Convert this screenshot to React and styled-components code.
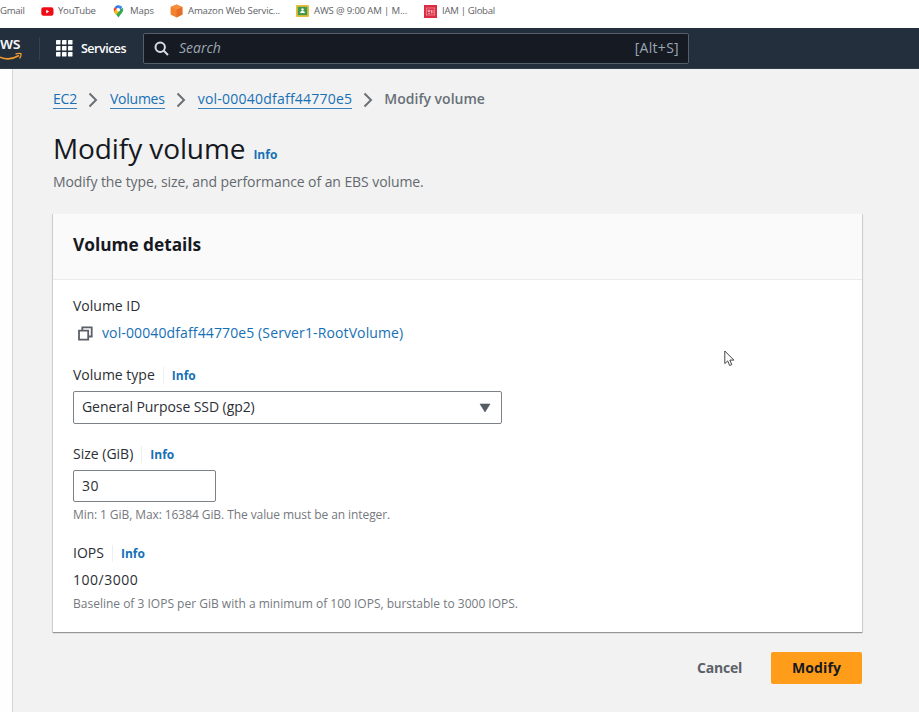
import React from "react";
import styled, { createGlobalStyle } from "styled-components";

const GlobalStyle = createGlobalStyle`
  * { box-sizing: border-box; }
  html, body { margin: 0; overflow: hidden; }
  body {
    font-family: "Open Sans", "Noto Sans", sans-serif;
    font-size: 14px;
    line-height: 20px;
    color: #2b2f35;
    background: #f2f2f2;
  }
`;

const Page = styled.div`
  display: flex;
  flex-direction: column;
  width: 919px;
  height: 712px;
  overflow: hidden;
  position: relative;
`;

const BookmarksBar = styled.div`
  display: flex;
  align-items: center;
  flex: none;
  height: 28px;
  padding-bottom: 6px;
  background: #fff;
`;

const Bookmark = styled.div`
  display: flex;
  align-items: center;
  flex: none;
  gap: ${(p) => p.$gap ?? 5}px;
  width: ${(p) => p.$width}px;
  font-size: 9.6px;
  line-height: 14px;
  letter-spacing: ${(p) => p.$tracking ?? -0.2}px;
  color: #606266;
  white-space: nowrap;
  svg { flex: none; display: block; }
`;

const NavBar = styled.header`
  display: flex;
  align-items: center;
  flex: none;
  height: 41px;
  background: #232f3d;
  color: #fff;
  border-bottom: 1px solid #343b48;
`;

const AwsLogo = styled.div`
  width: 23px;
  height: 30px;
  flex: none;
`;

const LogoText = styled.div`
  font-size: 16px;
  font-weight: 600;
  line-height: 18px;
  height: 18px;
  margin-top: 1px;
  letter-spacing: -0.4px;
  color: #f4f5f6;
`;

const LogoSmile = styled.svg`
  display: block;
`;

const NavDivider = styled.span`
  width: 1px;
  height: 23px;
  margin-left: 16px;
  background: #35414f;
`;

const ServicesButton = styled.div`
  display: flex;
  align-items: center;
  gap: 8px;
  width: 87px;
  padding-top: 1px;
  margin-left: 16px;
  font-size: 12.5px;
  font-weight: 600;
  letter-spacing: -0.5px;
`;

const SearchBox = styled.div`
  display: flex;
  align-items: center;
  width: 546px;
  height: 31px;
  padding: 0 9px 0 10px;
  background: #161a22;
  border: 1px solid #53606c;
  border-radius: 2px;
  color: #9ba7b3;
  svg { flex: none; }
`;

const SearchHint = styled.span`
  flex: 1;
  margin-left: 10px;
  font-style: italic;
`;

const Shortcut = styled.span`
  letter-spacing: 0.3px;
`;

const Body = styled.div`
  display: flex;
  flex: 1;
`;

const SideRail = styled.aside`
  width: 13px;
  flex: none;
  background: #fdfefd;
  border-right: 1px solid #d3d5d6;
`;

const Main = styled.main`
  width: 849px;
  padding: 20px 0 0 40px;
`;

const Breadcrumbs = styled.nav`
  display: flex;
  align-items: center;
  height: 20px;
  svg { flex: none; margin: 1px 12px 0 11px; }
`;

const Crumb = styled.a`
  height: 19px;
  line-height: 18px;
  border-bottom: 1px solid #3a80b9;
  color: #1670b6;
  letter-spacing: ${(p) => p.$tracking}px;
`;

const CurrentCrumb = styled.span`
  font-weight: 600;
  color: #687078;
  margin-left: -1px;
  letter-spacing: 0;
`;

const TitleRow = styled.div`
  display: flex;
  align-items: baseline;
  height: 36px;
  margin-top: 21px;
`;

const Title = styled.h1`
  margin: 0;
  font-size: 28px;
  line-height: 36px;
  font-weight: 400;
  letter-spacing: -0.1px;
  color: #16191f;
`;

const InfoLink = styled.a`
  font-size: 12px;
  line-height: 20px;
  font-weight: ${(p) => p.$weight ?? 700};
  color: #1670b6;
  margin-left: 8px;
`;

const Subtitle = styled.p`
  margin: 6px 0 0;
  height: 20px;
  letter-spacing: -0.08px;
  color: #64696f;
`;

const Card = styled.section`
  height: 418px;
  margin-top: 22px;
  background: #fff;
  box-shadow: 0 1px 1px 0 rgba(0, 10, 20, 0.32), 0 0 1px 1px rgba(0, 10, 20, 0.1);
  clip-path: inset(0 -3px -3px -3px);
`;

const CardHeader = styled.div`
  height: 66px;
  padding: 19px 20px 0;
  background: #fafafa;
  border-bottom: 1px solid #ebebeb;
`;

const CardTitle = styled.h2`
  margin: 0;
  font-size: 17.3px;
  line-height: 24px;
  font-weight: 700;
  letter-spacing: -0.02px;
  color: #16191f;
`;

const CardBody = styled.div`
  padding: 16px 20px 0;
`;

const Field = styled.div`
  margin-bottom: ${(p) => p.$gap}px;
`;

const LabelRow = styled.div`
  display: flex;
  align-items: center;
  height: 20px;
  ${InfoLink} { padding-top: 2px; }
`;

const LabelDivider = styled.span`
  width: 1px;
  height: 17px;
  margin-left: 8px;
  background: #edeff0;
`;

const ResourceLink = styled.a`
  display: flex;
  align-items: center;
  height: 20px;
  margin-top: 7px;
  padding-left: 5px;
  gap: 9px;
  letter-spacing: 0.12px;
  color: #1670b6;
`;

const Control = styled.div`
  display: flex;
  align-items: center;
  justify-content: space-between;
  width: ${(p) => p.$width}px;
  height: ${(p) => p.$height}px;
  margin-top: 6px;
  padding: 0 10px ${(p) => p.$lift ?? 0}px 8px;
  border: 1px solid #7c8288;
  border-radius: 2px;
  background: #fff;
  letter-spacing: ${(p) => p.$tracking}px;
  svg { position: relative; top: 1px; }
`;

const Value = styled.div`
  height: 20px;
  margin-top: 7px;
  letter-spacing: 0.5px;
`;

const Hint = styled.div`
  height: 16px;
  margin-top: ${(p) => p.$top}px;
  font-size: 12px;
  line-height: 16px;
  letter-spacing: ${(p) => p.$tracking ?? 0}px;
  color: #75797e;
`;

const Actions = styled.div`
  display: flex;
  justify-content: flex-end;
  margin-top: 20px;
`;

const Button = styled.button`
  height: 32px;
  width: ${(p) => (p.$primary ? 91 : 85)}px;
  margin-left: ${(p) => (p.$primary ? 9 : 0)}px;
  padding: 0 0 1px;
  border: 0;
  border-radius: 2px;
  font: 700 14px/20px "Open Sans", "Noto Sans", sans-serif;
  letter-spacing: ${(p) => (p.$primary ? 0.1 : -0.2)}px;
  color: ${(p) => (p.$primary ? "#16191f" : "#5b6169")};
  background: ${(p) => (p.$primary ? "#ff9c1a" : "transparent")};
`;

const Pointer = styled.svg`
  position: absolute;
  left: 724px;
  top: 350px;
`;

const Chevron = () => (
  <svg width="10" height="16" viewBox="0 0 10 16">
    <path d="M1.5 1.5 8 8 1.5 14.5" fill="none" stroke="#6b7075" strokeWidth="2" />
  </svg>
);

const YouTubeIcon = () => (
  <svg width="13" height="13" viewBox="0 0 13 13">
    <rect x="0.3" y="2.2" width="12.2" height="8.6" rx="2.2" fill="#f00a14" />
    <path d="M5.2 4.7v3.7l3-1.85z" fill="#fff" />
  </svg>
);

const MapsIcon = () => (
  <svg width="11" height="13" viewBox="0 0 11 13">
    <path d="M1.2 7 5.5 12.6 9.7 6.8c.6-1.2.6-2.7.1-3.8z" fill="#34a853" />
    <path d="M9.3 2.1A4.7 4.7 0 0 0 5.5.2L3.5 6l2 1.8z" fill="#4285f4" />
    <path d="M5.5.2A4.8 4.8 0 0 0 1.8 2l2 1.8L6.2.3z" fill="#1a73e8" />
    <path d="M1.8 2A4.8 4.8 0 0 0 1.2 7l2.6-3.2z" fill="#ea4335" />
    <path d="M1.2 7c.5 1 1.3 1.8 2 2.7l4-4.6-3.4-1.3z" fill="#fbbc04" />
    <circle cx="5.4" cy="4.7" r="1.7" fill="#fff" />
  </svg>
);

const CubeIcon = () => (
  <svg width="13" height="14" viewBox="0 0 13 14">
    <path d="M6.5.4 12.4 3v7.6l-5.9 3-5.9-3V3z" fill="#f3812f" />
    <path d="M6.5 5.6 12.4 3v7.6l-5.9 3z" fill="#e56d27" />
    <path d="M6.5.4 12.4 3 6.5 5.6.6 3z" fill="#f68f3f" />
  </svg>
);

const ClassroomIcon = () => (
  <svg width="13" height="12" viewBox="0 0 13 12">
    <rect width="13" height="12" rx="1" fill="#e8bd3a" />
    <rect x="1.8" y="1.8" width="9.4" height="8.4" fill="#3f9a50" />
    <circle cx="6.5" cy="4.5" r="1.2" fill="#fff" />
    <path d="M4 8c.4-1.400 1.300-1.900 2.500-1.900S8.600 6.600 9 8z" fill="#fff" />
  </svg>
);

const IamIcon = () => (
  <svg width="13" height="13" viewBox="0 0 13 13">
    <rect width="13" height="13" fill="#dc2c42" />
    <rect x="2.3" y="3" width="8.4" height="7" fill="none" stroke="#f29aa6" strokeWidth=".7" />
    <path d="M4 5.200h2v1.300H4zM4 8.300h2M7.500 5v3.500M9 5v3.500" fill="none" stroke="#f9c3ca" strokeWidth=".8" />
  </svg>
);

const GridIcon = () => (
  <svg width="17" height="17" viewBox="0 0 17 17" fill="#fff">
    {[0, 6, 12].map((y) =>
      [0, 6, 12].map((x) => <rect key={`${x}-${y}`} x={x} y={y} width="4.5" height="4.5" rx=".4" />)
    )}
  </svg>
);

const SearchIcon = () => (
  <svg width="15" height="15" viewBox="0 0 15 15" fill="none" stroke="#d9dde1" strokeWidth="2">
    <circle cx="6.2" cy="6.2" r="4.700" />
    <path d="m9.500 9.500 4.500 4.500" />
  </svg>
);

const CopyIcon = () => (
  <svg width="15" height="15" viewBox="0 0 15 15" fill="none" stroke="#5a6068" strokeWidth="1.8">
    <path d="M1 4.600h9.200v9H1z" />
    <path d="M4.300 4.300V1.300h9.400v9.200h-3" />
  </svg>
);

const Caret = () => (
  <svg width="12" height="10" viewBox="0 0 12 10">
    <path d="M1 1h10L6 9z" fill="#545b64" stroke="#545b64" strokeLinejoin="round" strokeWidth=".6" />
  </svg>
);

export default function App() {
  return (
    <Page>
      <GlobalStyle />
      <BookmarksBar>
        <Bookmark $width={41} $tracking={-0.3}>Gmail</Bookmark>
        <Bookmark $width={72} $gap={4} $tracking={-0.25}><YouTubeIcon />YouTube</Bookmark>
        <Bookmark $width={57} $gap={6} $tracking={-0.15}><MapsIcon />Maps</Bookmark>
        <Bookmark $width={126} $tracking={-0.18}><CubeIcon />Amazon Web Servic...</Bookmark>
        <Bookmark $width={128} $tracking={-0.17}><ClassroomIcon />AWS @ 9:00 AM | M...</Bookmark>
        <Bookmark $width={90} $tracking={-0.3}><IamIcon />IAM | Global</Bookmark>
      </BookmarksBar>
      <NavBar>
        <AwsLogo>
          <LogoText>ws</LogoText>
          <LogoSmile width="23" height="9" viewBox="0 0 23 9">
            <path d="M0 5.200C6 7.600 13 7.200 19 3.600" fill="none" stroke="#f29b2e" strokeWidth="1.700" />
            <path d="M15.500 2.200c2-.9 4-1 5.500-.5.300 1.600-.3 3.300-1.400 4.800" fill="none" stroke="#f29b2e" strokeWidth="1.300" />
          </LogoSmile>
        </AwsLogo>
        <NavDivider />
        <ServicesButton><GridIcon />Services</ServicesButton>
        <SearchBox>
          <SearchIcon />
          <SearchHint>Search</SearchHint>
          <Shortcut>[Alt+S]</Shortcut>
        </SearchBox>
      </NavBar>
      <Body>
        <SideRail />
        <Main>
          <Breadcrumbs>
            <Crumb $tracking={-0.2}>EC2</Crumb>
            <Chevron />
            <Crumb $tracking={-0.25}>Volumes</Crumb>
            <Chevron />
            <Crumb $tracking={0.23}>vol-00040dfaff44770e5</Crumb>
            <Chevron />
            <CurrentCrumb>Modify volume</CurrentCrumb>
          </Breadcrumbs>
          <TitleRow>
            <Title>Modify volume</Title>
            <InfoLink>Info</InfoLink>
          </TitleRow>
          <Subtitle>Modify the type, size, and performance of an EBS volume.</Subtitle>
          <Card>
            <CardHeader>
              <CardTitle>Volume details</CardTitle>
            </CardHeader>
            <CardBody>
              <Field $gap={22}>
                <LabelRow>Volume ID</LabelRow>
                <ResourceLink><CopyIcon />vol-00040dfaff44770e5 (Server1-RootVolume)</ResourceLink>
              </Field>
              <Field $gap={20}>
                <LabelRow>Volume type<LabelDivider /><InfoLink>Info</InfoLink></LabelRow>
                <Control $width={429} $height={33} $lift={2} $tracking={-0.08}>General Purpose SSD (gp2)<Caret /></Control>
              </Field>
              <Field $gap={20}>
                <LabelRow>Size (GiB)<LabelDivider /><InfoLink>Info</InfoLink></LabelRow>
                <Control $width={143} $height={32} $tracking={0.5}>30</Control>
                <Hint $top={5} $tracking={-0.08}>Min: 1 GiB, Max: 16384 GiB. The value must be an integer.</Hint>
              </Field>
              <Field $gap={0}>
                <LabelRow>IOPS<LabelDivider /><InfoLink>Info</InfoLink></LabelRow>
                <Value>100/3000</Value>
                <Hint $top={6}>Baseline of 3 IOPS per GiB with a minimum of 100 IOPS, burstable to 3000 IOPS.</Hint>
              </Field>
            </CardBody>
          </Card>
          <Actions>
            <Button>Cancel</Button>
            <Button $primary>Modify</Button>
          </Actions>
        </Main>
      </Body>
      <Pointer width="11" height="17" viewBox="0 0 11 17">
        <path d="M.8 1v12.600l2.900-2.700 2 4.600 2.100-.9-2-4.500h4.100z" fill="#fff" stroke="#444" strokeWidth="1" />
      </Pointer>
    </Page>
  );
}
